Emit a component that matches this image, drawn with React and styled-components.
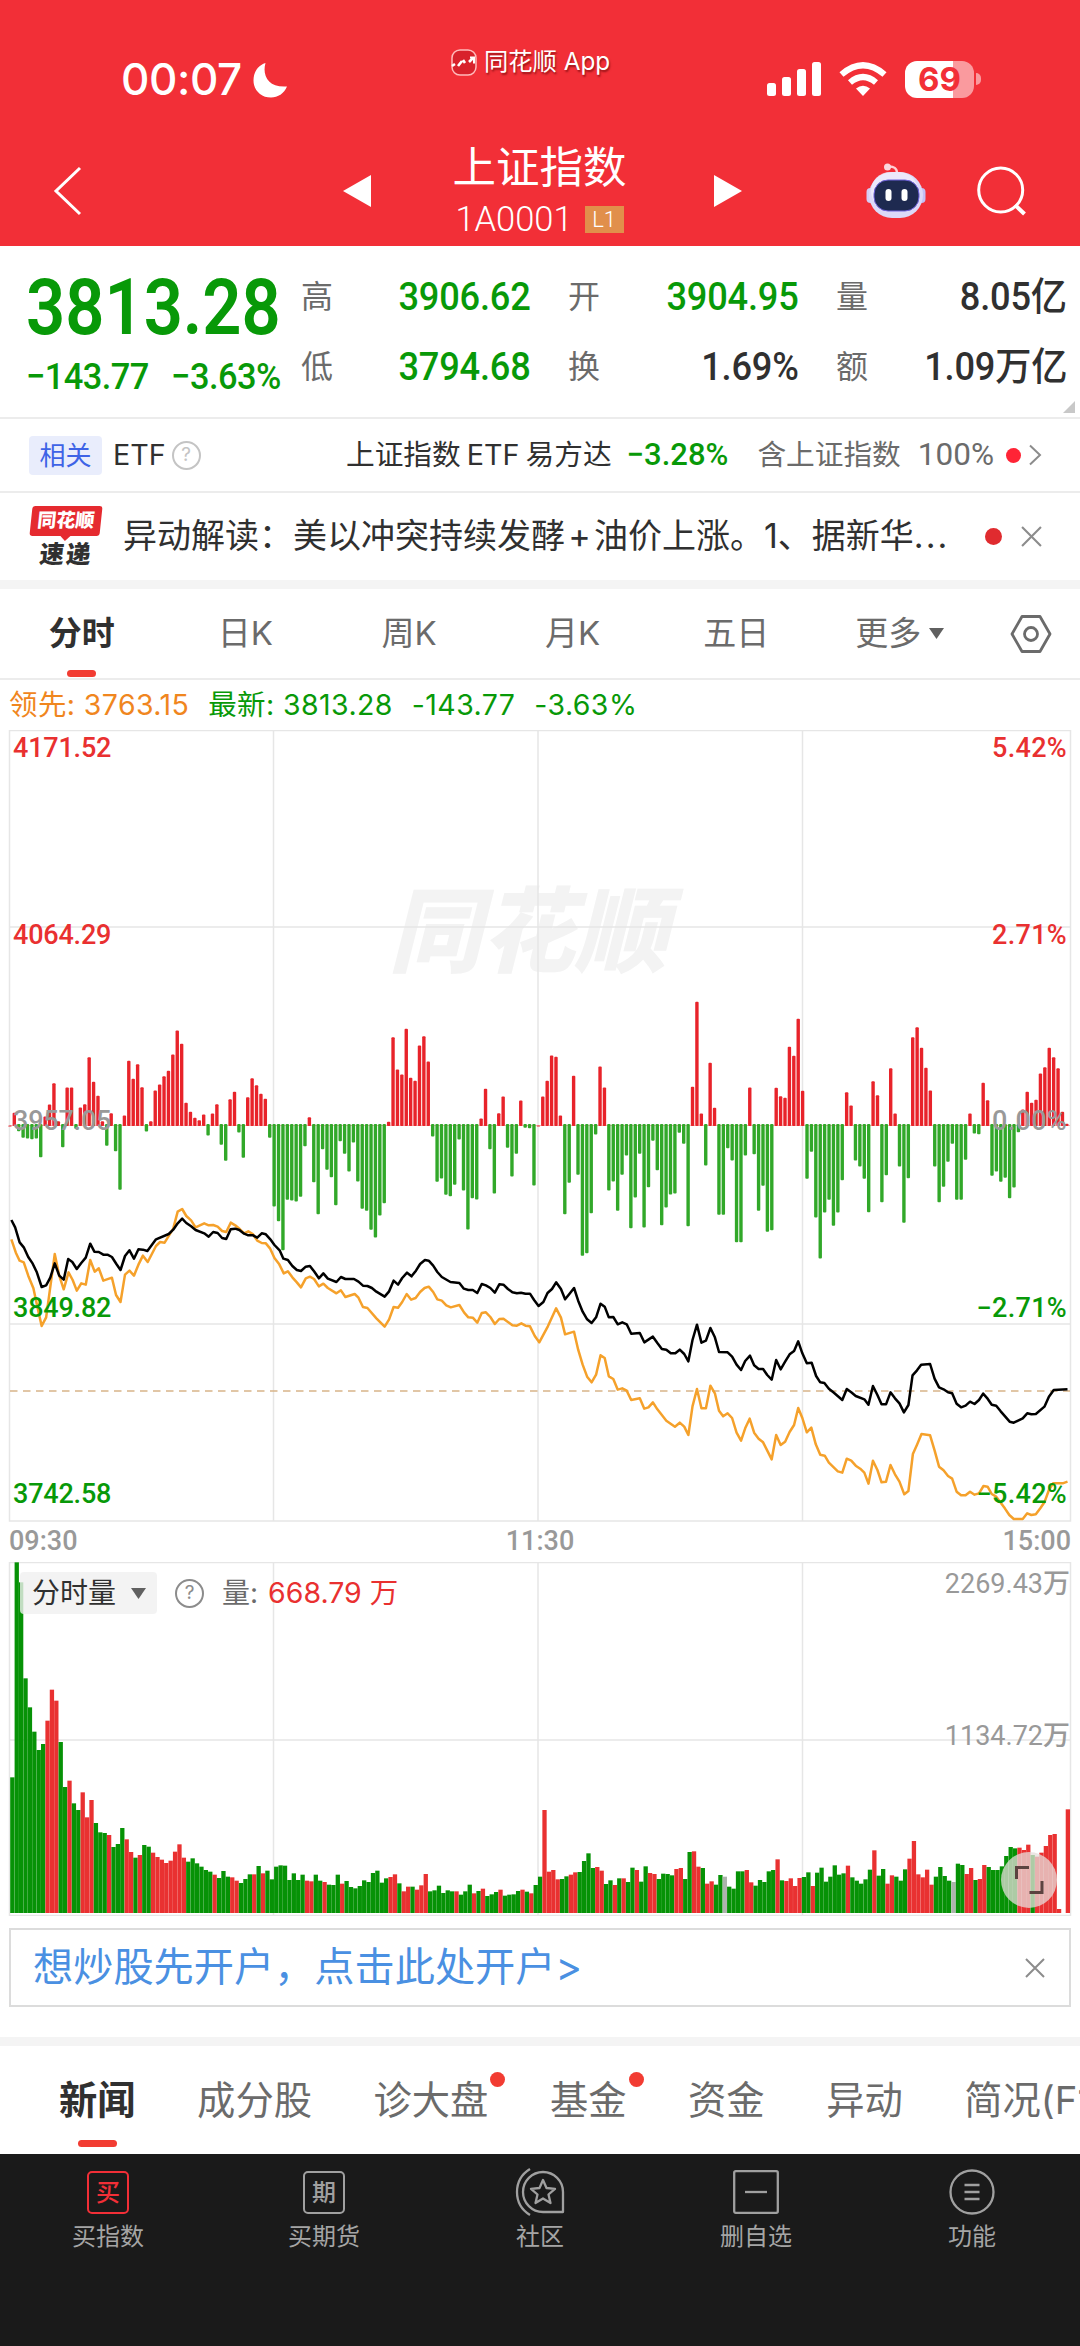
import React from 'react';
import styled, { createGlobalStyle, css } from 'styled-components';

const color = {
   brand: '#f22f37',
   rise: '#e93030',
   fall: '#089908',
   text: '#303030',
   muted: '#6b6b6b',
   axis: '#999',
   line: '#ececec',
   band: '#f4f4f4',
   accent: '#f23c32',
   lead: '#f0861e',
};

const font = {
   ui: '"Inter", "Noto Sans CJK SC", sans-serif',
   number: '"Roboto", "Noto Sans CJK SC", sans-serif',
};

/* Offsets of the momentum bars, one per minute. Lower than the zero level is up. */
const MOMENTUM_ZERO = 495;
const momentum = `495 457 512 532 534 536 534 590 468 432 368 482 560 381 381 505 441 431 290 364
406 482 556 458 572 688 465 301 355 311 380 513 482 390 372 347 331 282 210 250
427 454 472 479 462 525 459 431 553 601 416 394 516 592 410 353 374 400 415 532
738 782 869 718 720 723 709 557 470 665 761 566 628 650 734 542 580 633 546 663
745 751 808 831 765 728 484 230 327 342 205 352 361 255 227 303 528 664 654 703
707 673 537 690 807 713 717 474 385 566 699 458 408 562 648 580 420 502 503 675
495 408 361 285 289 465 761 667 346 643 886 878 758 522 318 381 690 663 751 643
585 803 711 580 801 680 541 629 794 741 702 699 517 550 797 379 124 459 615 307
442 763 763 563 600 845 845 585 381 581 751 676 814 809 382 407 412 259 286 175
391 655 574 771 894 756 718 796 756 659 395 435 600 618 655 755 362 404 725 644
323 459 618 787 653 230 200 262 322 390 618 725 679 604 550 718 718 598 459 519
521 367 419 646 633 664 652 713 681 515 447 394 427 418 339 320 262 290 323 454
490`
   .split(/\s+/)
   .map(Number);

const priceLine =
   '33,120 44,142 57,187 69,202 82,231 95,251 107,277 121,321 134,316 146,293 159,250 172,287 185,299 198,237 210,246 223,267 236,249 249,233 262,191 274,215 287,216 300,224 312,224 325,231 338,252 350,270 363,228 376,211 389,236 402,208 415,209 428,213 453,178 490,162 503,149 516,130 529,116 541,129 555,139 568,150 593,160 606,170 619,156 632,159 645,174 657,177 670,148 683,146 695,150 709,161 721,166 735,166 747,173 760,160 772,163 785,178 797,195 812,211 823,236 836,240 849,258 862,270 874,273 888,260 900,258 912,274 926,295 939,280 952,296 977,306 990,291 1003,297 1028,297 1041,305 1054,317 1067,318 1080,324 1093,335 1117,350 1130,334 1143,302 1156,314 1168,294 1182,278 1195,289 1208,272 1220,252 1234,240 1245,242 1258,257 1270,276 1283,291 1308,306 1334,309 1347,326 1360,330 1373,330 1386,339 1399,312 1411,316 1424,324 1437,338 1450,313 1462,314 1475,327 1488,337 1501,340 1513,338 1526,341 1539,341 1551,360 1564,378 1578,366 1590,339 1603,327 1615,307 1629,327 1641,358 1654,341 1667,324 1679,362 1692,395 1705,418 1718,429 1731,412 1744,371 1756,380 1768,412 1781,411 1794,433 1807,427 1820,433 1833,461 1858,459 1871,487 1896,470 1909,489 1922,507 1935,509 1948,520 1961,520 1974,509 1987,522 1999,544 2011,480 2024,434 2037,488 2050,482 2063,444 2076,472 2088,516 2113,517 2126,530 2139,554 2152,570 2164,543 2178,527 2190,556 2203,567 2216,567 2228,585 2241,599 2254,540 2267,568 2280,545 2293,523 2306,513 2318,484 2330,520 2343,550 2357,548 2370,588 2382,607 2394,609 2407,626 2420,637 2446,660 2459,627 2472,637 2485,648 2510,658 2522,674 2535,618 2548,645 2560,673 2573,673 2586,637 2599,655 2612,670 2625,697 2638,675 2650,586 2663,571 2675,554 2701,552 2714,596 2727,622 2740,628 2753,637 2765,640 2778,671 2791,682 2804,677 2817,665 2830,672 2843,660 2855,641 2868,656 2880,674 2893,677 2906,694 2932,725 2944,728 2970,715 2983,700 2995,703 3008,702 3033,680 3046,650 3060,630 3100,628';

const leadLine =
   '33,178 46,218 57,242 69,247 82,287 97,325 108,378 121,438 134,412 147,314 159,222 172,287 185,328 199,277 211,300 223,332 236,310 249,314 262,240 275,275 287,265 300,302 325,293 337,345 350,366 363,284 376,272 389,287 402,254 415,227 429,246 453,198 465,186 478,188 503,146 516,95 529,87 541,108 555,121 568,142 593,130 606,136 619,135 632,140 645,153 657,156 670,128 683,136 697,148 709,160 721,154 734,162 747,182 760,189 772,190 784,205 797,234 811,253 824,280 836,274 849,292 862,307 874,322 888,295 900,290 912,297 926,319 939,311 952,324 977,340 990,331 1003,351 1030,342 1041,353 1054,381 1067,384 1093,415 1117,440 1130,418 1143,381 1156,383 1168,366 1181,342 1194,359 1207,354 1220,336 1233,324 1245,320 1258,336 1270,358 1283,362 1296,376 1309,382 1334,375 1348,398 1360,412 1373,413 1386,428 1399,399 1411,397 1424,411 1437,432 1450,417 1462,416 1488,436 1501,437 1514,430 1526,437 1539,439 1553,468 1566,487 1591,439 1615,385 1629,413 1641,463 1667,455 1679,509 1692,554 1705,590 1718,607 1731,584 1744,526 1756,534 1768,589 1781,597 1794,629 1807,625 1820,632 1833,660 1858,655 1871,686 1883,682 1896,667 1909,688 1935,722 1960,740 1974,728 1987,740 1999,765 2011,679 2024,627 2037,685 2050,685 2063,617 2076,640 2088,692 2100,709 2113,700 2126,714 2139,758 2152,782 2164,745 2177,716 2190,758 2203,776 2216,787 2241,838 2254,765 2267,795 2280,785 2293,756 2306,735 2318,684 2330,714 2343,757 2356,743 2369,793 2382,824 2395,827 2407,848 2433,874 2446,878 2459,836 2472,842 2485,857 2498,866 2510,878 2522,911 2535,842 2548,870 2560,907 2573,905 2586,855 2599,883 2612,905 2626,943 2638,933 2651,822 2663,794 2676,762 2701,766 2714,811 2727,860 2740,871 2753,888 2765,896 2778,935 2791,946 2804,946 2817,935 2830,944 2843,940 2856,918 2868,920 2880,942 2893,950 2918,985 2931,1005 2944,1017 2970,1017 2983,1000 2995,1005 3008,1003 3021,985 3033,967 3046,930 3058,910 3086,910 3100,905';

/* Top level of every volume bar with its direction: g falls, r rises, x is flat. */
const volume = `712g 67g 127g 415g 502g 575g 630g 612g 542r 449r 482r 606g 741g 722r 790g 810g 757r 832r 780r 849g
877g 879g 885r 921g 912g 864g 898r 936r 953g 945r 915g 920g 938r 951r 959r 969r 962r 935r 913r 953r
965g 955g 970g 980g 990g 995g 1004r 1014g 993g 1010g 1012r 1022r 1029g 1017g 1003g 1003r 978g 1000r 992g 1018g
980g 976g 977g 1020g 1000g 1020g 1004g 1022r 1024r 1004g 1022g 1026r 1034g 1035g 1004g 1031r 1023g 1041g 1045g 1038g
1021g 1026g 999g 992g 1028g 1015g 1011r 1003r 1030g 1054r 1040r 1040g 1049r 1036r 1002r 1054g 1051g 1037g 1059g 1051g
1054g 1054r 1064g 1054g 1034g 1060r 1053g 1046r 1068g 1063g 1056g 1049r 1067g 1064g 1063g 1053g 1049r 1055g 1060r 1035g
1010g 810r 995r 990r 1018r 1017g 1009g 1004r 997r 996g 963g 940g 984g 981r 992r 1032g 1021g 1035r 1015g 1015r
1026g 983g 990r 1025g 979g 999r 1002r 1017g 1001g 1002g 1006g 987r 984r 1017g 936g 934r 980r 984g 1031r 1024r
1034g 1005g 1010x 1040g 1046g 994g 994g 990r 1027r 1037g 1020g 1026g 994g 990g 958r 1021g 1023r 1015r 1038r 1014r
1011g 997g 1038r 998g 983g 1025g 1010g 976g 1004g 1000g 977r 1012g 1022g 1031g 1018g 989g 931r 1007g 987g 1031r
1006r 1010g 1022g 988g 956r 903r 1003r 1012r 989r 1034r 1010g 981g 1008g 1022g 1026x 971g 975g 1002r 984r 1020g
1017r 975r 981g 990g 990g 979g 948g 921g 925g 923r 930r 914r 945g 950r 938r 918r 885r 882r 1107r 1119r
808r`
   .split(/\s+/)
   .map((item) => ({ top: parseInt(item, 10), kind: item.slice(-1) }));

const volumeFill = { g: '#069206', r: '#e93131', x: '#adb3ad' };

const GlobalStyle = createGlobalStyle`
   * {
      box-sizing: border-box;
   }

   body {
      margin: 0;
      background: #fff;
      color: ${color.text};
      font-family: ${font.ui};
      line-height: 1.3;
   }
`;

const Screen = styled.div`
   display: flex;
   flex-direction: column;
   width: 1080px;
   height: 2346px;
   overflow: hidden;
   background: #fff;
   white-space: nowrap;
`;

const Header = styled.header`
   height: 246px;
   background: ${color.brand};
   color: #fff;
`;

const StatusBar = styled.div`
   display: grid;
   grid-template-columns: 330px 160px 1fr;
   height: 130px;
   padding: 31px 99px 0 121px;
`;

const Clock = styled.div`
   display: flex;
   align-items: center;
   gap: 11px;
   height: 98px;
   font-size: 44px;
   font-weight: 500;
   letter-spacing: -0.4px;
`;

const AppLabel = styled.div`
   display: flex;
   align-items: center;
   gap: 7px;
   height: 62px;
   font-size: 24.3px;
   text-shadow: 1px 2px 2px rgba(90, 0, 0, 0.6);
`;

const StatusIcons = styled.div`
   display: flex;
   align-items: center;
   justify-content: flex-end;
   gap: 18px;
   height: 96px;
`;

const Battery = styled.div`
   display: flex;
   align-items: center;
   justify-content: center;
   width: 69px;
   height: 37px;
   border-radius: 12px;
   background: linear-gradient(90deg, #fff 70%, #fa9a9e 70%);
   color: ${color.brand};
   font-size: 33px;
   font-weight: 700;
`;

const BatteryWrap = styled.div`
   display: flex;
   align-items: center;
   gap: 2px;

   &::after {
      content: '';
      width: 5px;
      height: 12px;
      border-radius: 0 6px 6px 0;
      background: #fa9a9e;
   }
`;

const TitleBar = styled.div`
   display: grid;
   grid-template-columns: 289px 82px 343px 152px 111px 1fr;
   align-items: center;
   height: 116px;
   padding-top: 6px;
`;

const Slot = styled.div`
   display: flex;
   justify-content: ${(props) => props.$justify || 'flex-start'};
   padding-left: ${(props) => props.$left || 0}px;
`;

const TitleBlock = styled.div`
   display: flex;
   flex-direction: column;
   align-items: center;
   padding-right: 6px;
`;

const Title = styled.h1`
   margin: 0;
   font-size: 43.5px;
   font-weight: 400;
   line-height: 56px;
`;

const Subtitle = styled.div`
   display: flex;
   align-items: center;
   gap: 12px;
   font-family: ${font.number};
   font-size: 34.5px;
   font-weight: 350;
   line-height: 48px;
`;

const Level = styled.span`
   width: 39px;
   height: 27px;
   background: #e18f4b;
   font-size: 22px;
   line-height: 28px;
   text-align: center;
`;

const Quote = styled.section`
   display: flex;
   position: relative;
   height: 173px;
   border-bottom: 2px solid ${color.line};

   &::after {
      content: '';
      position: absolute;
      right: 5px;
      bottom: 4px;
      border: 6px solid transparent;
      border-right-color: #c8c8c8;
      border-bottom-color: #c8c8c8;
   }
`;

const Price = styled.div`
   width: 301px;
   padding: 16px 0 0 26px;
   color: ${color.fall};
   font-family: ${font.number};
`;

const LastPrice = styled.div`
   font-size: 78px;
   font-weight: 600;
   line-height: 92px;
   transform: scaleX(0.88);
   transform-origin: left;
`;

const Change = styled.div`
   display: flex;
   gap: 24px;
   font-size: 37px;
   font-weight: 500;
   letter-spacing: -0.6px;
   line-height: 46px;
   transform: scaleX(0.93);
   transform-origin: left;
`;

const Stats = styled.dl`
   display: grid;
   grid-template-columns: 230px 231px 231px;
   grid-auto-rows: 70px;
   column-gap: 37px;
   margin: 16px 0 0;
`;

const Stat = styled.div`
   display: flex;
   align-items: center;
   justify-content: space-between;

   dt {
      color: ${color.muted};
      font-size: 32px;
   }

   dd {
      margin: 0;
      color: ${(props) => (props.$fall ? color.fall : color.text)};
      font-family: ${font.number};
      font-size: 38.5px;
      font-weight: 500;
      letter-spacing: -0.2px;
      line-height: 50px;
      transform: scaleX(0.94);
      transform-origin: right;
   }
`;

const Related = styled.section`
   display: flex;
   align-items: center;
   height: 74px;
   padding: 0 37px 0 29px;
   border-bottom: 2px solid ${color.line};
   font-size: 28.7px;
`;

const Tag = styled.span`
   width: 73px;
   height: 39px;
   margin-right: 11px;
   border-radius: 4px;
   background: #e9edfc;
   color: #3e63e6;
   font-size: 26px;
   line-height: 39px;
   text-align: center;
`;

const HelpMark = styled.span`
   display: flex;
   align-items: center;
   justify-content: center;
   width: 29px;
   height: 29px;
   margin-left: ${(props) => props.$gap || 6}px;
   border: 2px solid ${(props) => props.$tone || '#c4c4c4'};
   border-radius: 50%;
   color: ${(props) => props.$tone || '#c4c4c4'};
   font-size: 19px;
`;

const FundName = styled.span`
   margin-left: auto;
   word-spacing: -2px;
`;

const Rate = styled.span`
   margin: 0 29px 0 15px;
   color: ${color.fall};
   font-family: ${font.number};
   font-size: 31px;
   font-weight: 500;
`;

const Share = styled.span`
   margin-right: 12px;
   color: ${color.muted};

   b {
      margin-left: 17px;
      font-family: ${font.number};
      font-size: 31.5px;
      font-weight: 400;
   }
`;

const Dot = styled.i`
   width: ${(props) => props.$size}px;
   height: ${(props) => props.$size}px;
   border-radius: 50%;
   background: ${(props) => props.$tone || '#ff2436'};
`;

const News = styled.section`
   display: flex;
   align-items: center;
   height: 96px;
   padding: 0 38px 0 30px;
   border-bottom: 9px solid ${color.band};
`;

const Express = styled.div`
   display: flex;
   flex-direction: column;
   align-items: center;
   width: 72px;
   margin-right: 21px;
   font-weight: 900;
   line-height: 1;
`;

const ExpressTop = styled.span`
   position: relative;
   width: 70px;
   height: 30px;
   border-radius: 3px;
   background: #e52a2f;
   color: #fff;
   font-size: 19px;
   line-height: 30px;
   text-align: center;
   transform: skewX(-6deg);

   &::after {
      content: '';
      position: absolute;
      left: 30px;
      top: 29px;
      border: 6px solid transparent;
      border-top-color: #e52a2f;
   }
`;

const ExpressBottom = styled.span`
   padding-top: 6px;
   font-size: 24.5px;
   letter-spacing: 2px;
   transform: skewX(-6deg);
`;

const Headline = styled.span`
   flex: 1;
   font-size: 34px;
`;

const Plus = styled.span`
   display: inline-block;
   width: 29px;
   text-align: center;
`;

const Ellipsis = styled.span`
   letter-spacing: 2px;
`;

const PeriodTabs = styled.nav`
   display: grid;
   grid-template-columns: repeat(6, 163.6px) 1fr;
   height: 91px;
   border-bottom: 2px solid ${color.line};
`;

const activeTab = css`
   color: ${color.text};
   font-weight: 600;

   &::after {
      content: '';
      position: absolute;
      bottom: ${(props) => props.$lineBottom}px;
      left: calc(50% - ${(props) => props.$lineWidth / 2}px);
      width: ${(props) => props.$lineWidth}px;
      height: 7px;
      border-radius: 3.5px;
      background: ${color.accent};
   }
`;

const PeriodTab = styled.span`
   display: flex;
   position: relative;
   align-items: center;
   justify-content: center;
   gap: 8px;
   color: ${color.muted};
   font-size: 33px;
   ${(props) => props.$active && activeTab}
`;

const Legend = styled.div`
   display: flex;
   align-items: center;
   gap: 19px;
   height: 50px;
   padding-left: 9px;
   color: ${color.fall};
   font-size: 28.5px;
   letter-spacing: 0.4px;
`;

const Lead = styled.span`
   color: ${color.lead};
`;

const Panel = styled.div`
   position: relative;
   height: ${(props) => props.$height}px;
`;

const Drawing = styled.svg`
   display: block;
   position: relative;
   width: 1080px;
   height: 100%;
`;

const Watermark = styled.div`
   position: absolute;
   top: 146px;
   left: -12px;
   width: 100%;
   color: #f3f3f3;
   font-size: 93px;
   font-style: italic;
   font-weight: 900;
   line-height: 110px;
   text-align: center;
`;

const Scale = styled.div`
   display: flex;
   position: absolute;
   top: 1px;
   ${(props) => (props.$right ? 'right: 13px;' : 'left: 13px;')}
   flex-direction: column;
   align-items: ${(props) => (props.$right ? 'flex-end' : 'flex-start')};
   font-family: ${font.number};
   font-size: 27px;
   font-weight: 500;
   letter-spacing: ${(props) => (props.$right ? 0.3 : -0.2)}px;
   line-height: 34px;
`;

const ScaleLabel = styled.span`
   height: 186.5px;
   color: ${(props) => props.$tone};
`;

const TimeAxis = styled.div`
   display: grid;
   grid-template-columns: 1fr 1fr 1fr;
   align-items: center;
   height: 40px;
   padding: 0 9px;
   color: ${color.axis};
   font-family: ${font.number};
   font-size: 27px;
   font-weight: 500;

   span:nth-child(2) {
      text-align: center;
   }

   span:last-child {
      text-align: right;
   }
`;

const VolumeBar = styled.div`
   display: flex;
   position: absolute;
   top: 10px;
   left: 20px;
   align-items: center;
   height: 42px;
   font-size: 28px;
`;

const Picker = styled.span`
   display: flex;
   align-items: center;
   gap: 15px;
   width: 137px;
   height: 42px;
   padding-left: 12px;
   border-radius: 4px;
   background: rgba(240, 240, 240, 0.8);
`;

const VolumeLabel = styled.span`
   margin: 0 10px 0 18px;
   color: ${color.muted};
`;

const VolumeValue = styled.span`
   color: ${color.rise};
   font-size: 28.5px;
`;

const VolumeScale = styled.div`
   display: flex;
   position: absolute;
   top: 5px;
   right: 10px;
   flex-direction: column;
   align-items: flex-end;
   gap: 118px;
   color: ${color.axis};
   font-family: ${font.number};
   font-size: 27px;
   font-weight: 450;
   line-height: 34px;
`;

const Expand = styled.div`
   display: flex;
   position: absolute;
   top: 290px;
   left: 1001px;
   align-items: center;
   justify-content: center;
   width: 56px;
   height: 56px;
   border-radius: 50%;
   background: rgba(229, 221, 219, 0.75);
`;

const Banner = styled.div`
   display: flex;
   align-items: center;
   justify-content: space-between;
   height: 79px;
   margin: 12px 9px 30px;
   padding: 0 24px 0 22px;
   border: 2px solid #dcdcdc;
   color: #4a90e2;
   font-size: 40.2px;
`;

const InfoTabs = styled.nav`
   display: flex;
   gap: 61.5px;
   height: 117px;
   padding-left: 59px;
   border-top: 9px solid ${color.band};
`;

const InfoTab = styled.span`
   display: flex;
   position: relative;
   align-items: center;
   padding-top: 1px;
   color: ${color.muted};
   font-size: 38.3px;
   ${(props) => props.$active && activeTab}

   ${Dot} {
      position: absolute;
      top: 26px;
      right: -17px;
   }
`;

const BottomNav = styled.nav`
   display: grid;
   flex: 1;
   grid-template-columns: repeat(5, 1fr);
   padding-top: 13px;
   background: #1a1a1a;
`;

const NavItem = styled.div`
   display: flex;
   flex-direction: column;
   align-items: center;
   color: #a5a5a5;
   font-size: 24px;
   line-height: 36px;
`;

const NavIcon = styled.div`
   display: flex;
   align-items: center;
   justify-content: center;
   height: 50px;
   margin-bottom: 2px;
   color: ${(props) => props.$tone || '#a0a0a0'};
`;

const WordBox = styled.span`
   width: 42px;
   height: 43px;
   border: 2.4px solid currentColor;
   border-radius: 5px;
   font-size: 24px;
   font-weight: 500;
   line-height: 39px;
   text-align: center;
`;

const Triangle = ({ direction }) => (
   <svg width="28" height="32" viewBox="0 0 28 32">
      <path d={direction === 'left' ? 'M28 0V32L0 16Z' : 'M0 0V32L28 16Z'} fill="#fff" />
   </svg>
);

const Caret = () => (
   <svg width="15" height="11" viewBox="0 0 15 11">
      <path d="M0 0H15L7.5 11Z" fill="#606060" />
   </svg>
);

const Close = ({ size }) => (
   <svg width={size} height={size} viewBox="0 0 20 20">
      <path d="M1 1L19 19M19 1L1 19" stroke="#8c8c8c" strokeWidth="2" fill="none" />
   </svg>
);

const Moon = () => (
   <svg width="35" height="36" viewBox="0 0 35 36">
      <path
         d="M12.5 1C9 13 15 26 34 24.5C31 31.5 25 35.5 18 35.5C8 35.5 0.5 28 0.5 18.5C0.5 10 5 3.5 12.5 1Z"
         fill="#fff"
      />
   </svg>
);

const AppMark = () => (
   <svg width="26" height="27" viewBox="0 0 26 27">
      <rect x="1" y="1" width="24" height="25" rx="8" fill="#d8222c" stroke="#fbb" strokeWidth="1.5" />
      <path d="M1 17L4 15M7 17L11 12M12 11L14 14M18 13L22 9" fill="none" stroke="#fff" strokeWidth="2.6" />
      <path d="M19 8.500h4v6" fill="none" stroke="#fff" strokeWidth="2" />
   </svg>
);

const Signal = () => (
   <svg width="54" height="34" viewBox="0 0 54 34">
      <g fill="#fff">
         <rect x="0" y="21" width="9" height="13" rx="2.5" />
         <rect x="15" y="15" width="9" height="19" rx="2.5" />
         <rect x="30" y="7" width="9" height="27" rx="2.5" />
         <rect x="45" y="0" width="9" height="34" rx="2.5" />
      </g>
   </svg>
);

const Wifi = () => (
   <svg width="48" height="34" viewBox="0 0 48 34">
      <g fill="none" stroke="#fff" strokeWidth="6.2">
         <path d="M2.5 12.5Q24 -6 45.5 12.5" />
         <path d="M11 20.5Q24 9.5 37 20.5" />
      </g>
      <path d="M17 26.5Q24 21 31 26.5L24 34Z" fill="#fff" />
   </svg>
);

const Robot = () => (
   <svg width="60" height="56" viewBox="0 0 60 56">
      <path d="M22 3.5Q31 3 31 10" fill="none" stroke="#ffd0d4" strokeWidth="2.4" />
      <circle cx="21.5" cy="4" r="3.5" fill="#fbd6dc" />
      <rect x="0.5" y="25" width="9" height="15" rx="4" fill="#d5cdf5" />
      <rect x="50.5" y="25" width="9" height="15" rx="4" fill="#c3bff5" />
      <rect x="3" y="9" width="54" height="46" rx="23" fill="#dcd9f8" />
      <rect x="5" y="9" width="47" height="38" rx="19" fill="#f2effc" opacity="0.7" />
      <rect x="8" y="17" width="45" height="31" rx="14" fill="#1e2a50" stroke="#6f62dc" strokeWidth="1" />
      <rect x="19.5" y="26" width="6" height="12" rx="3" fill="#fff" />
      <rect x="35.5" y="26" width="6" height="12" rx="3" fill="#fff" />
   </svg>
);

const Search = () => (
   <svg width="50" height="50" viewBox="0 0 50 50">
      <g fill="none" stroke="#fff" strokeWidth="3">
         <circle cx="23.7" cy="24" r="22" />
         <path d="M38 39L47.5 48" strokeWidth="4" />
      </g>
   </svg>
);

const Settings = () => (
   <svg width="42" height="38" viewBox="0 0 42 38">
      <g fill="none" stroke="#6b6b6b" strokeWidth="2.8">
         <path d="M12 1.500H30L40 19L30 36.500H12L2 19Z" strokeLinejoin="round" />
         <circle cx="21" cy="19" r="6.5" />
      </g>
   </svg>
);

const Community = () => (
   <svg width="50" height="48" viewBox="0 0 50 48">
      <g fill="none" stroke="currentColor" strokeWidth="2.3" strokeLinejoin="round">
         <path d="M48 44V24A20 20 0 1 0 28 44Z" />
         <path d="M28 12L31.5 20L40 20.8L33.5 26.5L35.5 35L28 30.5L20.5 35L22.5 26.5L16 20.8L24.5 20Z" />
         <path d="M15 1Q2 9 2 24T15 47" />
      </g>
   </svg>
);

const RemoveBox = () => (
   <svg width="46" height="44" viewBox="0 0 46 44">
      <g fill="none" stroke="currentColor" strokeWidth="2.3">
         <rect x="1.2" y="1.2" width="43.6" height="41.6" rx="1.5" />
         <path d="M12 22H34" />
      </g>
   </svg>
);

const MenuCircle = () => (
   <svg width="46" height="46" viewBox="0 0 46 46">
      <g fill="none" stroke="currentColor" strokeWidth="2.3">
         <circle cx="23" cy="23" r="21.5" />
         <path d="M15.5 16H30.5M15.5 23H30.5M15.5 30H30.5" />
      </g>
   </svg>
);

const priceScale = [
   ['4171.52', '5.42%', color.rise],
   ['4064.29', '2.71%', color.rise],
   ['3957.05', '0.00%', color.axis],
   ['3849.82', '−2.71%', color.fall],
   ['3742.58', '−5.42%', color.fall],
];

const PriceChart = () => (
   <Panel $height={792}>
      <Watermark>同花顺</Watermark>
      <Drawing viewBox="0 0 1080 792">
         <path
            d="M9.5 0.5H1070.5V791H9.5ZM9.5 197H1070.5M9.5 594H1070.5M273.5 0V791M538 0V791M802.5 0V791"
            fill="none"
            stroke="#e6e6e6"
            strokeWidth="1.5"
         />
         <path d="M10 395.5H1070" stroke="#f5b5b5" />
         {momentum.map((level, i) => {
            const size = (level - MOMENTUM_ZERO) / 3;
            return (
               <rect
                  key={i}
                  x={8.2 + i * 4.404}
                  y={size > 0 ? 394 : 395.5 + size}
                  width="3.4"
                  height={Math.max(Math.abs(size) + (size > 0 ? 1.5 : 0.5), 1)}
                  rx="1"
                  fill={size > 0 ? '#31a829' : '#e8232a'}
               />
            );
         })}
         <path d="M10 661H1070" stroke="#d8b489" strokeWidth="1.5" strokeDasharray="7.5 5.5" />
         <svg width="1080" height="792" viewBox="0 0 3136.3 2376" preserveAspectRatio="none">
            <g transform="translate(0 1350)" fill="none" strokeWidth="2.5" strokeLinejoin="round">
               <polyline points={leadLine} stroke="#f5a12b" vectorEffect="non-scaling-stroke" />
               <polyline points={priceLine} stroke="#000" vectorEffect="non-scaling-stroke" />
            </g>
         </svg>
      </Drawing>
      <Scale>
         {priceScale.map(([price, , tone]) => (
            <ScaleLabel key={price} $tone={tone}>
               {price}
            </ScaleLabel>
         ))}
      </Scale>
      <Scale $right>
         {priceScale.map(([, percent, tone]) => (
            <ScaleLabel key={percent} $tone={tone}>
               {percent}
            </ScaleLabel>
         ))}
      </Scale>
   </Panel>
);

const VolumeChart = () => (
   <Panel $height={354}>
      <Drawing viewBox="0 0 1080 354">
         <path
            d="M9.5 0.5H1070.5V353.5H9.5ZM9.5 178H1070.5M273.5 0V353M538 0V353M802.5 0V353"
            fill="none"
            stroke="#e6e6e6"
            strokeWidth="1.5"
         />
         {volume.map(({ top, kind }, i) => (
            <rect
               key={i}
               x={10.2 + i * 4.398}
               y={top / 3 - 22}
               width="4.3"
               height={(1119 - top) / 3}
               fill={volumeFill[kind]}
            />
         ))}
      </Drawing>
      <VolumeBar>
         <Picker>
            分时量
            <Caret />
         </Picker>
         <HelpMark $gap={18} $tone="#8c8c8c">
            ?
         </HelpMark>
         <VolumeLabel>量:</VolumeLabel>
         <VolumeValue>668.79 万</VolumeValue>
      </VolumeBar>
      <VolumeScale>
         <span>2269.43万</span>
         <span>1134.72万</span>
      </VolumeScale>
      <Expand>
         <svg width="30" height="30" viewBox="0 0 30 30">
            <path d="M2.5 14V2.5H15M28 16V27.5H15.5" fill="none" stroke="#5c4340" strokeWidth="3" />
         </svg>
      </Expand>
   </Panel>
);

const stats = [
   ['高', '3906.62', true],
   ['开', '3904.95', true],
   ['量', '8.05亿', false],
   ['低', '3794.68', true],
   ['换', '1.69%', false],
   ['额', '1.09万亿', false],
];

const infoTabs = [
   ['新闻', false],
   ['成分股', false],
   ['诊大盘', true],
   ['基金', true],
   ['资金', false],
   ['异动', false],
   ['简况(F10)', false],
];

export default function App() {
   return (
      <Screen>
         <GlobalStyle />
         <Header>
            <StatusBar>
               <Clock>
                  00:07
                  <Moon />
               </Clock>
               <AppLabel>
                  <AppMark />
                  同花顺 App
               </AppLabel>
               <StatusIcons>
                  <Signal />
                  <Wifi />
                  <BatteryWrap>
                     <Battery>69</Battery>
                  </BatteryWrap>
               </StatusIcons>
            </StatusBar>
            <TitleBar>
               <Slot $left={53}>
                  <svg width="30" height="50" viewBox="0 0 30 50">
                     <path d="M27 2L3 25L27 48" fill="none" stroke="#fff" strokeWidth="3" />
                  </svg>
               </Slot>
               <Slot $justify="flex-end">
                  <Triangle direction="left" />
               </Slot>
               <TitleBlock>
                  <Title>上证指数</Title>
                  <Subtitle>
                     1A0001
                     <Level>L1</Level>
                  </Subtitle>
               </TitleBlock>
               <Slot>
                  <Triangle direction="right" />
               </Slot>
               <Slot>
                  <Robot />
               </Slot>
               <Slot>
                  <Search />
               </Slot>
            </TitleBar>
         </Header>

         <Quote>
            <Price>
               <LastPrice>3813.28</LastPrice>
               <Change>
                  <span>−143.77</span>
                  <span>−3.63%</span>
               </Change>
            </Price>
            <Stats>
               {stats.map(([label, value, fall]) => (
                  <Stat key={label} $fall={fall}>
                     <dt>{label}</dt>
                     <dd>{value}</dd>
                  </Stat>
               ))}
            </Stats>
         </Quote>

         <Related>
            <Tag>相关</Tag>
            ETF
            <HelpMark>?</HelpMark>
            <FundName>上证指数 ETF 易方达</FundName>
            <Rate>−3.28%</Rate>
            <Share>
               含上证指数<b>100%</b>
            </Share>
            <Dot $size={15} />
            <svg width="22" height="22" viewBox="0 0 22 22">
               <path d="M9 1.5L19 11L9 20.5" fill="none" stroke="#8c8c8c" strokeWidth="2" />
            </svg>
         </Related>

         <News>
            <Express>
               <ExpressTop>同花顺</ExpressTop>
               <ExpressBottom>速递</ExpressBottom>
            </Express>
            <Headline>
               异动解读：美以冲突持续发酵<Plus>+</Plus>油价上涨。1、据新华<Ellipsis>...</Ellipsis>
            </Headline>
            <Dot $size={17} $tone="#e02b2f" />
            <Slot $left={19}>
               <Close size={21} />
            </Slot>
         </News>

         <PeriodTabs>
            <PeriodTab $active $lineBottom={1} $lineWidth={29}>
               分时
            </PeriodTab>
            <PeriodTab>日K</PeriodTab>
            <PeriodTab>周K</PeriodTab>
            <PeriodTab>月K</PeriodTab>
            <PeriodTab>五日</PeriodTab>
            <PeriodTab>
               更多
               <Caret />
            </PeriodTab>
            <PeriodTab>
               <Settings />
            </PeriodTab>
         </PeriodTabs>

         <Legend>
            <Lead>领先: 3763.15</Lead>
            <span>最新: 3813.28</span>
            <span>-143.77</span>
            <span>-3.63%</span>
         </Legend>

         <PriceChart />
         <TimeAxis>
            <span>09:30</span>
            <span>11:30</span>
            <span>15:00</span>
         </TimeAxis>
         <VolumeChart />

         <Banner>
            想炒股先开户，点击此处开户&gt;
            <Close size={20} />
         </Banner>

         <InfoTabs>
            {infoTabs.map(([label, dot], i) => (
               <InfoTab key={label} $active={i === 0} $lineBottom={7} $lineWidth={39}>
                  {label}
                  {dot && <Dot $size={15} $tone={color.accent} />}
               </InfoTab>
            ))}
         </InfoTabs>

         <BottomNav>
            <NavItem>
               <NavIcon $tone="#f22f37">
                  <WordBox>买</WordBox>
               </NavIcon>
               买指数
            </NavItem>
            <NavItem>
               <NavIcon>
                  <WordBox>期</WordBox>
               </NavIcon>
               买期货
            </NavItem>
            <NavItem>
               <NavIcon>
                  <Community />
               </NavIcon>
               社区
            </NavItem>
            <NavItem>
               <NavIcon>
                  <RemoveBox />
               </NavIcon>
               删自选
            </NavItem>
            <NavItem>
               <NavIcon>
                  <MenuCircle />
               </NavIcon>
               功能
            </NavItem>
         </BottomNav>
      </Screen>
   );
}
